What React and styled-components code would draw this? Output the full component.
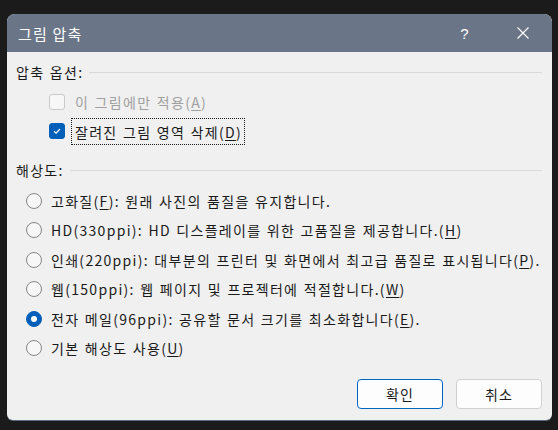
import React from "react";
import styled, { createGlobalStyle } from "styled-components";

const GlobalStyle = createGlobalStyle`
  body {
    margin: 0;
    background: #1b1b1b;
    font-family: "Noto Sans CJK KR", "Noto Sans", sans-serif;
  }
`;

const Screen = styled.div`
  padding: 14px 0 0 7px;
  height: 430px;
  box-sizing: border-box;
`;

const Dialog = styled.div`
  width: 545px;
  height: 406px;
  background: #f0f0f0;
  border-radius: 8px 8px 6px 6px;
  overflow: hidden;
  box-shadow: 0 1px 0 #5d6a7d;
  display: flex;
  flex-direction: column;
`;

const TitleBar = styled.div`
  height: 38px;
  flex-shrink: 0;
  background: #6a7688;
  color: #fff;
  display: flex;
  align-items: center;
  padding-left: 11px;
  font-size: 15px;
  letter-spacing: 1.2px;
`;

const Title = styled.div`
  flex: 1;
`;

const TitleButton = styled.div`
  width: 58px;
  height: 38px;
  display: flex;
  align-items: center;
  justify-content: center;
  font-family: "Liberation Sans", sans-serif;
  font-size: 15px;
`;

const Body = styled.div`
  flex: 1;
  padding: 8px 10px 11px 9px;
  display: flex;
  flex-direction: column;
  color: #1a1a1a;
  font-size: 14px;
  letter-spacing: 1.3px;
  word-spacing: 1px;
`;

const GroupHeader = styled.div`
  height: 24px;
  display: flex;
  align-items: center;
  gap: 6px;
  margin-top: ${(p) => p.$top || 0}px;
  margin-bottom: ${(p) => p.$bottom || 0}px;

  &::after {
    content: "";
    flex: 1;
    height: 1px;
    background: #d9d9d9;
  }
`;

const Row = styled.div`
  height: 29.5px;
  display: flex;
  align-items: center;
  padding-left: ${(p) => p.$indent}px;
  color: ${(p) => (p.$disabled ? "#a0a0a0" : "#1a1a1a")};
  white-space: nowrap;
`;

const Box = styled.span`
  width: 16px;
  height: 16px;
  flex-shrink: 0;
  box-sizing: border-box;
  border-radius: 3px;
  border: 1px solid ${(p) => (p.$checked ? "#005fb8" : "#c9c9c9")};
  background: ${(p) => (p.$checked ? "#005fb8" : "#f7f7f7")};
  display: flex;
  align-items: center;
  justify-content: center;
  margin-right: 7px;
`;

const Radio = styled.span`
  width: 16px;
  height: 16px;
  flex-shrink: 0;
  box-sizing: border-box;
  border-radius: 50%;
  border: 1px solid ${(p) => (p.$checked ? "#005fb8" : "#858585")};
  background: ${(p) => (p.$checked ? "#005fb8" : "#f7f7f7")};
  display: flex;
  align-items: center;
  justify-content: center;
  margin-right: 9px;

  &::after {
    content: "";
    display: ${(p) => (p.$checked ? "block" : "none")};
    width: 6px;
    height: 6px;
    border-radius: 50%;
    background: #fff;
  }
`;

const BoxLabel = styled.span`
  padding: 3px 2px 2px 3px;
  outline: ${(p) => (p.$focus ? "1px dotted #1a1a1a" : "none")};
`;

const Key = styled.span`
  text-decoration: underline;
  text-underline-offset: 2px;
`;

const Footer = styled.div`
  margin-top: auto;
  display: flex;
  justify-content: flex-end;
  gap: 13px;
`;

const Button = styled.button`
  width: 86px;
  height: 30px;
  box-sizing: border-box;
  border-radius: 4px;
  border: 1px solid ${(p) => (p.$primary ? "#0067c0" : "#d0d0d0")};
  background: #fdfdfd;
  font-family: inherit;
  font-size: 14px;
  letter-spacing: 1px;
  color: #1a1a1a;
  padding: 0;
`;

const Check = () => (
  <svg width="10" height="10" viewBox="0 0 10 10">
    <path d="M2 5.2 L4.1 7.2 L8 3" fill="none" stroke="#fff" strokeWidth="1.2" />
  </svg>
);

const Close = () => (
  <svg width="12" height="12" viewBox="0 0 12 12">
    <path d="M0.5 0.5 L11.5 11.5 M11.5 0.5 L0.5 11.5" stroke="#fff" strokeWidth="1.1" />
  </svg>
);

const options = [
  { label: "고화질", key: "F", text: ": 원래 사진의 품질을 유지합니다." },
  { label: "HD(330ppi): HD 디스플레이를 위한 고품질을 제공합니다.", key: "H" },
  { label: "인쇄(220ppi): 대부분의 프린터 및 화면에서 최고급 품질로 표시됩니다", key: "P", text: "." },
  { label: "웹(150ppi): 웹 페이지 및 프로젝터에 적절합니다.", key: "W" },
  { label: "전자 메일(96ppi): 공유할 문서 크기를 최소화합니다", key: "E", text: ".", checked: true },
  { label: "기본 해상도 사용", key: "U" },
];

export default function App() {
  return (
    <Screen>
      <GlobalStyle />
      <Dialog>
        <TitleBar>
          <Title>그림 압축</Title>
          <TitleButton>?</TitleButton>
          <TitleButton>
            <Close />
          </TitleButton>
        </TitleBar>
        <Body>
          <GroupHeader $bottom={3}>압축 옵션:</GroupHeader>
          <Row $indent={33} $disabled>
            <Box />
            <BoxLabel>
              이 그림에만 적용(<Key>A</Key>)
            </BoxLabel>
          </Row>
          <Row $indent={33}>
            <Box $checked>
              <Check />
            </Box>
            <BoxLabel $focus>
              잘려진 그림 영역 삭제(<Key>D</Key>)
            </BoxLabel>
          </Row>
          <GroupHeader $top={12} $bottom={4}>
            해상도:
          </GroupHeader>
          {options.map((o) => (
            <Row key={o.key} $indent={10}>
              <Radio $checked={o.checked} />
              <span>
                {o.label}(<Key>{o.key}</Key>){o.text}
              </span>
            </Row>
          ))}
          <Footer>
            <Button $primary>확인</Button>
            <Button>취소</Button>
          </Footer>
        </Body>
      </Dialog>
    </Screen>
  );
}
